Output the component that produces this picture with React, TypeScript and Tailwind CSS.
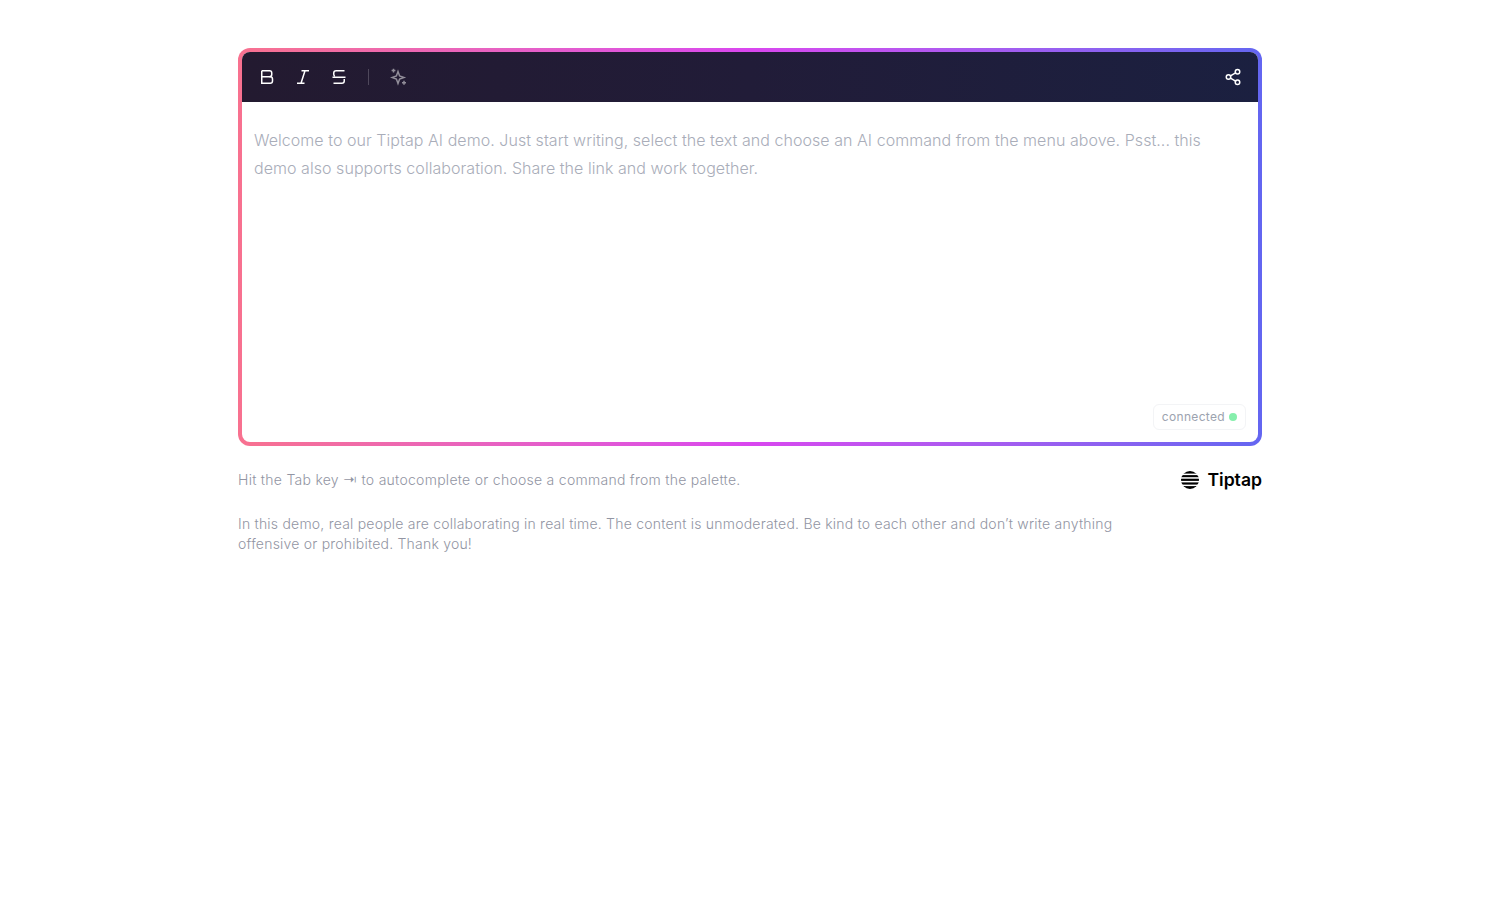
import { Share2 } from "lucide-react";

function ToolIcon({ children }: { children: React.ReactNode }) {
  return (
    <button className="flex h-8 w-8 items-center justify-center rounded-lg text-white">
      {children}
    </button>
  );
}

function BoldIcon() {
  return (
    <svg width="18" height="18" viewBox="0 0 18 18" fill="none" stroke="currentColor" strokeWidth="1.5">
      <path d="M3.75 2.75H11.5C12.9 2.75 13.75 3.6 13.75 4.9V6.6C13.75 7.9 12.9 8.75 11.5 8.75H3.75" />
      <path d="M11.5 8.75H12.2C13.7 8.75 14.5 9.6 14.5 10.9V13C14.5 14.4 13.7 15.25 12.2 15.25H3.75V2.75" />
    </svg>
  );
}

function ItalicIcon() {
  return (
    <svg width="18" height="18" viewBox="0 0 18 18" fill="none" stroke="currentColor" strokeWidth="1.5">
      <path d="M7.5 2.75H15M3 15.25H10.5M11 2.75L7 15.25" />
    </svg>
  );
}

function StrikeIcon() {
  return (
    <svg width="18" height="18" viewBox="0 0 18 18" fill="none" stroke="currentColor" strokeWidth="1.5">
      <path d="M14.5 2.75H6.2C4.6 2.75 3.75 3.6 3.75 4.9V6.2C3.75 7 4.1 7.6 4.8 8M2.5 9.25H15.5M14.25 11V13C14.25 14.4 13.4 15.25 11.8 15.25H3.5" />
    </svg>
  );
}

function SparkleIcon() {
  return (
    <svg width="18" height="18" viewBox="0 0 18 18" fill="none" stroke="currentColor" strokeWidth="1.5">
      <path d="M8 3.5L9.6 7.9L14 9.5L9.6 11.1L8 15.5L6.4 11.1L2 9.5L6.4 7.9L8 3.5Z" />
      <path d="M3.5 0.75V4.5M1.6 2.6H5.4M14 12.75V16.75M12 14.75H16" />
    </svg>
  );
}

function TiptapMark() {
  return (
    <svg width="18" height="18" viewBox="0 0 18 18" fill="#000">
      <circle cx="9" cy="9" r="9" />
      <g fill="#fff">
        <rect x="0" y="2.6" width="18" height="1.5" />
        <rect x="0" y="6.2" width="18" height="1.5" />
        <rect x="0" y="9.9" width="18" height="1.5" />
        <rect x="0" y="13.6" width="18" height="1.5" />
      </g>
    </svg>
  );
}

export default function App() {
  return (
    <div className="min-h-[900px] bg-white pt-12 font-['Inter',sans-serif]">
      <div className="mx-auto w-[1024px]">
        <div className="rounded-xl bg-gradient-to-r from-[#f8718f] via-[#d946ef] to-[#6366f1] p-1">
          <div className="flex h-[390px] flex-col overflow-hidden rounded-lg bg-white">
            <div className="flex h-[50px] items-center justify-between bg-gradient-to-r from-[#231a30] via-[#211c38] to-[#1b2040] px-[9px]">
              <div className="flex items-center gap-1">
                <ToolIcon><BoldIcon /></ToolIcon>
                <ToolIcon><ItalicIcon /></ToolIcon>
                <ToolIcon><StrikeIcon /></ToolIcon>
                <div className="ml-[9px] mr-2.5 h-4 w-px bg-white/20" />
                <ToolIcon>
                  <span className="text-white/50"><SparkleIcon /></span>
                </ToolIcon>
              </div>
              <ToolIcon><Share2 size={18} strokeWidth={2} /></ToolIcon>
            </div>
            <div className="flex flex-1 flex-col justify-between px-3 pb-3 pt-6">
              <p className="text-base font-light leading-7 tracking-[0.05px] text-[#a9adb9]">
                Welcome to our Tiptap AI demo. Just start writing, select the text and choose an AI command from the menu above. Psst... this demo also supports collaboration. Share the link and work together.
              </p>
              <div className="flex justify-end">
                <div className="flex h-[26px] items-center gap-1 rounded-md border border-[#f3f4f6] px-2 text-xs tracking-[0.33px] text-[#9ca3af]">
                  connected
                  <span className="h-2 w-2 rounded-full bg-[#86efac]" />
                </div>
              </div>
            </div>
          </div>
        </div>
        <div className="mt-6 flex items-start justify-between text-sm font-light text-[#9295a3]">
          <div className="w-[900px]">
            <p className="leading-5 tracking-[0.27px]">Hit the Tab key ⇥ to autocomplete or choose a command from the palette.</p>
            <p className="mt-6 leading-5 tracking-[0.215px]">
              In this demo, real people are collaborating in real time. The content is unmoderated. Be kind to each other and don’t write anything offensive or prohibited. Thank you!
            </p>
          </div>
          <div className="flex items-center gap-2">
            <TiptapMark />
            <span className="text-[17.6px] font-semibold leading-5 text-black">Tiptap</span>
          </div>
        </div>
      </div>
    </div>
  );
}
